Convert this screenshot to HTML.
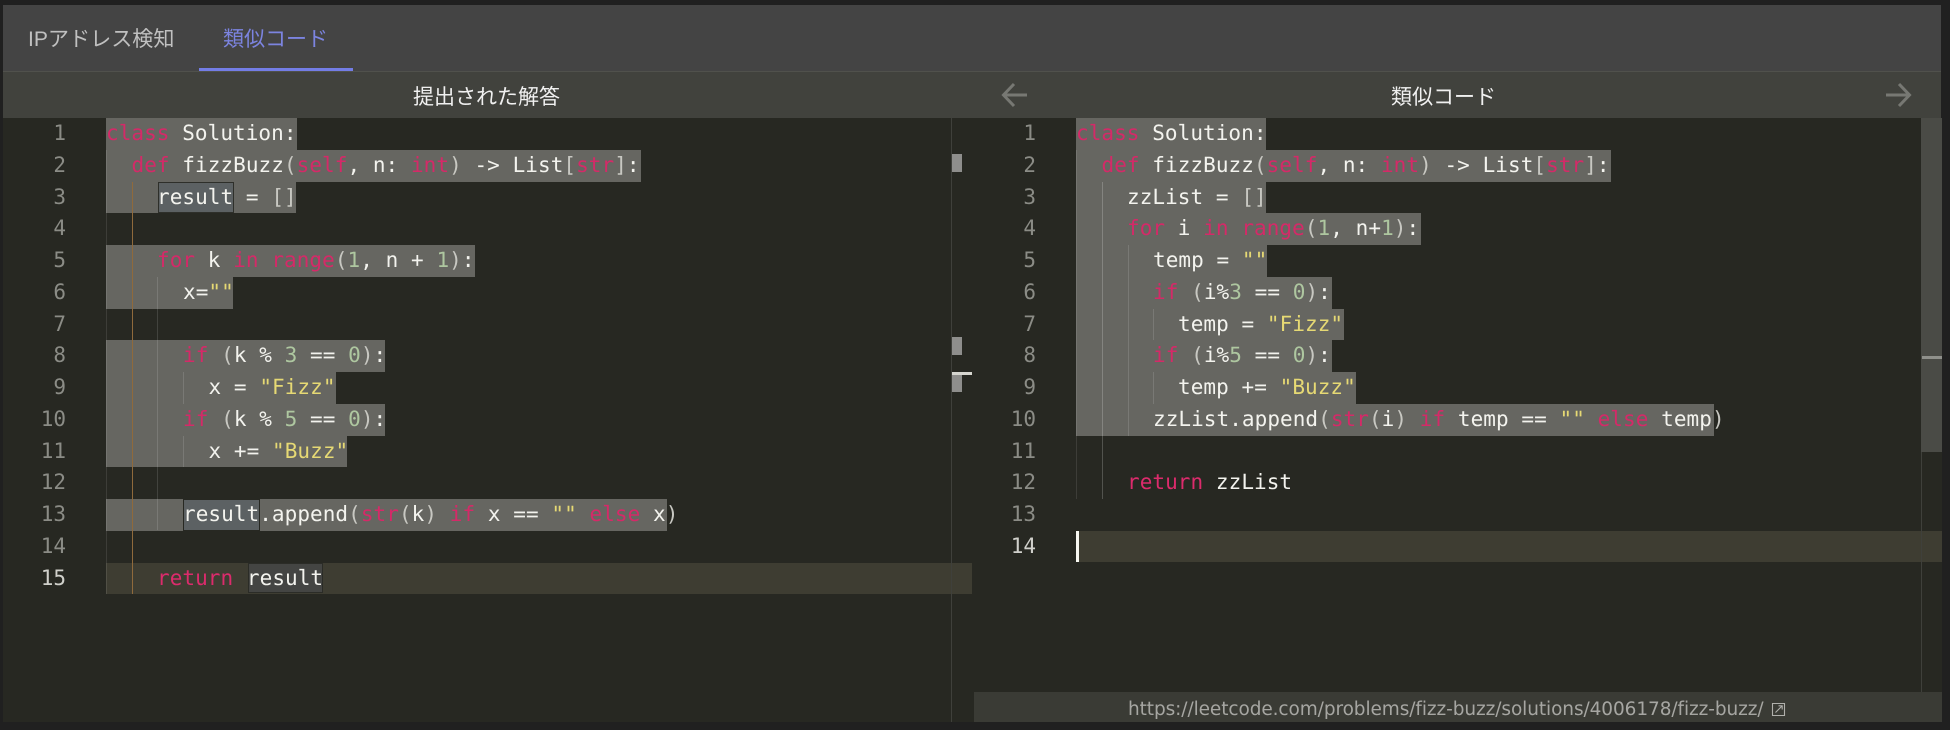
<!DOCTYPE html>
<html><head><meta charset="utf-8"><style>
html,body{margin:0;padding:0;width:1950px;height:730px;overflow:hidden;background:#202020}
div,svg,span{box-sizing:border-box}
.a{position:absolute}
#root{position:relative;width:1950px;height:730px;overflow:hidden}
.cjk{font-family:"Liberation Sans","Noto Sans CJK JP",sans-serif;white-space:nowrap}
.s{position:absolute;height:31.75px;background:#666661}
.t{position:absolute;height:31.75px;line-height:31.75px;margin-top:.2px;font-family:"DejaVu Sans Mono","Liberation Mono",monospace;font-size:21px;letter-spacing:.06px;white-space:pre;color:#f3f3ee;text-rendering:geometricPrecision}
.n{position:absolute;height:31.75px;line-height:31.75px;margin-top:.2px;width:60px;text-align:right;font-family:"DejaVu Sans Mono","Liberation Mono",monospace;font-size:21px;color:#8b8c86}
.k{color:#dc2b6c}.q{color:#d42a68}.d{color:#aec7a0}.y{color:#e6d974}.p{color:#c8c8c2}
.g{position:absolute;width:1px;background:rgba(255,255,255,.13)}
</style></head><body><div id="root">
<div class="a" style="left:3px;top:5px;width:1938px;height:66px;background:#444444"></div>
<div class="a" style="left:3px;top:71px;width:1938px;height:1px;background:#50514c"></div>
<div class="a" style="left:3px;top:72px;width:1938px;height:46px;background:#41423d"></div>
<div class="a" style="left:3px;top:118px;width:1939px;height:604px;background:#272822"></div>

<div class="a cjk" style="left:28px;top:26px;font-size:21.1px;line-height:28px;color:#c0c0c0">IPアドレス検知</div>
<div class="a cjk" style="left:223px;top:26px;font-size:21px;line-height:28px;color:#7c84e0">類似コード</div>
<div class="a" style="left:199px;top:68px;width:154px;height:3px;background:#737de6"></div>

<div class="a cjk" style="left:413px;top:83px;font-size:21px;line-height:30px;color:#f0f0f0">提出された解答</div>
<div class="a cjk" style="left:1391px;top:83px;font-size:21px;line-height:30px;color:#f0f0f0">類似コード</div>
<svg class="a" style="left:1000px;top:81px" width="30" height="28" viewBox="0 0 30 28" fill="none" stroke="#777873" stroke-width="3"><path d="M27 14H4M14 3L3.500 14 14 25"/></svg>
<svg class="a" style="left:1883px;top:81px" width="30" height="28" viewBox="0 0 30 28" fill="none" stroke="#777873" stroke-width="3"><path d="M3 14H26M16 3L26.500 14 16 25"/></svg>

<!-- left selections -->
<div class="s" style="left:106px;top:118px;width:190.500px"></div>
<div class="s" style="left:106px;top:149.750px;width:535px"></div>
<div class="s" style="left:106px;top:181.500px;width:190px"></div>
<div class="s" style="left:106px;top:245px;width:368.500px"></div>
<div class="s" style="left:106px;top:276.750px;width:126.500px"></div>
<div class="s" style="left:106px;top:340px;width:279px"></div>
<div class="s" style="left:106px;top:372px;width:229.700px"></div>
<div class="s" style="left:106px;top:403.750px;width:279px"></div>
<div class="s" style="left:106px;top:435.500px;width:241px"></div>
<div class="s" style="left:106px;top:499px;width:77px"></div>
<div class="s" style="left:260px;top:499px;width:406.500px"></div>
<div class="a" style="left:106px;top:562.500px;width:866px;height:31.250px;background:#3e3d32"></div>
<div class="a" style="left:158px;top:181.500px;width:76px;height:31px;background:#5c6163;border:1px solid #2e2f2a"></div>
<div class="a" style="left:184px;top:500px;width:75px;height:29.500px;background:#5c6163"></div>
<div class="a" style="left:248px;top:563px;width:75px;height:30px;background:#444543;border:1px solid #2b2c27"></div>
<!-- left guides -->
<div class="g" style="left:106px;top:149.750px;height:444px;background:rgba(255,255,255,.10)"></div>
<div class="g" style="left:132px;top:181.500px;height:412px;background:#8f6a3c"></div>
<div class="g" style="left:157px;top:276.750px;height:253.500px"></div>
<div class="g" style="left:183px;top:372px;height:31.750px"></div>
<div class="g" style="left:183px;top:435.500px;height:31.750px"></div>
<!-- left numbers -->
<div class="n" style="left:6px;top:118px">1</div>
<div class="n" style="left:6px;top:149.750px">2</div>
<div class="n" style="left:6px;top:181.500px">3</div>
<div class="n" style="left:6px;top:213.250px">4</div>
<div class="n" style="left:6px;top:245px">5</div>
<div class="n" style="left:6px;top:276.750px">6</div>
<div class="n" style="left:6px;top:308.500px">7</div>
<div class="n" style="left:6px;top:340.250px">8</div>
<div class="n" style="left:6px;top:372px">9</div>
<div class="n" style="left:6px;top:403.750px">10</div>
<div class="n" style="left:6px;top:435.500px">11</div>
<div class="n" style="left:6px;top:467.250px">12</div>
<div class="n" style="left:6px;top:499px">13</div>
<div class="n" style="left:6px;top:530.750px">14</div>
<div class="n" style="left:6px;top:562.500px;color:#d0d0cb">15</div>
<!-- left code -->
<div class="t" style="left:106px;top:118px"><span class="q">class</span> Solution:</div>
<div class="t" style="left:131.500px;top:149.750px"><span class="q">def</span> fizzBuzz<span class="p">(</span><span class="q">self</span>, n: <span class="q">int</span><span class="p">)</span> -&gt; List<span class="p">[</span><span class="q">str</span><span class="p">]</span>:</div>
<div class="t" style="left:157px;top:181.500px">result = <span class="p">[]</span></div>
<div class="t" style="left:157px;top:245px"><span class="q">for</span> k <span class="q">in</span> <span class="q">range</span><span class="p">(</span><span class="d">1</span>, n + <span class="d">1</span><span class="p">)</span>:</div>
<div class="t" style="left:183px;top:276.750px">x=<span class="y">""</span></div>
<div class="t" style="left:183px;top:340.250px"><span class="q">if</span> <span class="p">(</span>k % <span class="d">3</span> == <span class="d">0</span><span class="p">)</span>:</div>
<div class="t" style="left:208.500px;top:372px">x = <span class="y">"Fizz"</span></div>
<div class="t" style="left:183px;top:403.750px"><span class="q">if</span> <span class="p">(</span>k % <span class="d">5</span> == <span class="d">0</span><span class="p">)</span>:</div>
<div class="t" style="left:208.500px;top:435.500px">x += <span class="y">"Buzz"</span></div>
<div class="t" style="left:183px;top:499px">result.append<span class="p">(</span><span class="q">str</span><span class="p">(</span>k<span class="p">)</span> <span class="q">if</span> x == <span class="y">""</span> <span class="q">else</span> x<span class="p">)</span></div>
<div class="t" style="left:157px;top:562.500px"><span class="k">return</span> <span style="margin-left:1px">result</span></div>

<!-- overview ruler left -->
<div class="a" style="left:951px;top:118px;width:1px;height:604px;background:#3f403b"></div>
<div class="a" style="left:952px;top:154px;width:10px;height:18px;background:#8e8e8c"></div>
<div class="a" style="left:952px;top:337px;width:10px;height:18px;background:#8e8e8c"></div>
<div class="a" style="left:952px;top:374px;width:10px;height:18px;background:#8e8e8c"></div>
<div class="a" style="left:952px;top:372px;width:20px;height:3px;background:#d6d6d0"></div>

<!-- right selections -->
<div class="s" style="left:1076px;top:118px;width:190px"></div>
<div class="s" style="left:1076px;top:149.750px;width:535px"></div>
<div class="s" style="left:1076px;top:181.500px;width:190px"></div>
<div class="s" style="left:1076px;top:213.250px;width:345px"></div>
<div class="s" style="left:1076px;top:245px;width:191px"></div>
<div class="s" style="left:1076px;top:276.750px;width:255.700px"></div>
<div class="s" style="left:1076px;top:308.500px;width:268px"></div>
<div class="s" style="left:1076px;top:340.250px;width:255.700px"></div>
<div class="s" style="left:1076px;top:372px;width:279.700px"></div>
<div class="s" style="left:1076px;top:403.750px;width:638px"></div>
<div class="a" style="left:1076px;top:530.500px;width:866px;height:31.750px;background:#3e3d32"></div>
<div class="a" style="left:1076px;top:530.500px;width:3px;height:31.750px;background:#f8f8f2"></div>
<!-- right guides -->
<div class="g" style="left:1076px;top:149.750px;height:349px;background:rgba(255,255,255,.10)"></div>
<div class="g" style="left:1102px;top:181.500px;height:317.500px;background:rgba(255,255,255,.2)"></div>
<div class="g" style="left:1128px;top:245px;height:190.500px"></div>
<div class="g" style="left:1153px;top:308.500px;height:31.750px"></div>
<div class="g" style="left:1153px;top:372px;height:31.750px"></div>
<!-- right numbers -->
<div class="n" style="left:976px;top:118px">1</div>
<div class="n" style="left:976px;top:149.750px">2</div>
<div class="n" style="left:976px;top:181.500px">3</div>
<div class="n" style="left:976px;top:213.250px">4</div>
<div class="n" style="left:976px;top:245px">5</div>
<div class="n" style="left:976px;top:276.750px">6</div>
<div class="n" style="left:976px;top:308.500px">7</div>
<div class="n" style="left:976px;top:340.250px">8</div>
<div class="n" style="left:976px;top:372px">9</div>
<div class="n" style="left:976px;top:403.750px">10</div>
<div class="n" style="left:976px;top:435.500px">11</div>
<div class="n" style="left:976px;top:467.250px">12</div>
<div class="n" style="left:976px;top:499px">13</div>
<div class="n" style="left:976px;top:530.750px;color:#d0d0cb">14</div>
<!-- right code -->
<div class="t" style="left:1076px;top:118px"><span class="q">class</span> Solution:</div>
<div class="t" style="left:1101.500px;top:149.750px"><span class="q">def</span> fizzBuzz<span class="p">(</span><span class="q">self</span>, n: <span class="q">int</span><span class="p">)</span> -&gt; List<span class="p">[</span><span class="q">str</span><span class="p">]</span>:</div>
<div class="t" style="left:1127px;top:181.500px">zzList = <span class="p">[]</span></div>
<div class="t" style="left:1127px;top:213.250px"><span class="q">for</span> i <span class="q">in</span> <span class="q">range</span><span class="p">(</span><span class="d">1</span>, n+<span class="d">1</span><span class="p">)</span>:</div>
<div class="t" style="left:1153px;top:245px">temp = <span class="y">""</span></div>
<div class="t" style="left:1153px;top:276.750px"><span class="q">if</span> <span class="p">(</span>i%<span class="d">3</span> == <span class="d">0</span><span class="p">)</span>:</div>
<div class="t" style="left:1178px;top:308.500px">temp = <span class="y">"Fizz"</span></div>
<div class="t" style="left:1153px;top:340.250px"><span class="q">if</span> <span class="p">(</span>i%<span class="d">5</span> == <span class="d">0</span><span class="p">)</span>:</div>
<div class="t" style="left:1178px;top:372px">temp += <span class="y">"Buzz"</span></div>
<div class="t" style="left:1153px;top:403.750px">zzList.append<span class="p">(</span><span class="q">str</span><span class="p">(</span>i<span class="p">)</span> <span class="q">if</span> temp == <span class="y">""</span> <span class="q">else</span> temp<span class="p">)</span></div>
<div class="t" style="left:1127px;top:467.250px"><span class="k">return</span> zzList</div>

<!-- right scrollbar -->
<div class="a" style="left:1921px;top:118px;width:1px;height:574px;background:#3f403b"></div>
<div class="a" style="left:1921px;top:118px;width:21px;height:334px;background:#4a4b46"></div>
<div class="a" style="left:1922px;top:356px;width:20px;height:3px;background:#8f908b"></div>

<!-- url bar -->
<div class="a" style="left:974px;top:692px;width:968px;height:30px;background:#3a3b35"></div>
<div class="a" style="left:1128px;top:695px;height:30px;line-height:30px;font-family:'DejaVu Sans','Liberation Sans',sans-serif;font-size:18.5px;letter-spacing:-.09px;color:#a6a6a2;white-space:nowrap">https://leetcode.com/problems/fizz-buzz/solutions/4006178/fizz-buzz/</div>
<svg class="a" style="left:1771px;top:702px" width="15" height="15" viewBox="0 0 15 15" fill="none" stroke="#b0b0ac" stroke-width="1.100"><path d="M1.500 1.500H13.500V13.500H1.500ZM4.500 10.500L11 4M7.500 3.800H11.200V7.500"/></svg>
</div></body></html>
